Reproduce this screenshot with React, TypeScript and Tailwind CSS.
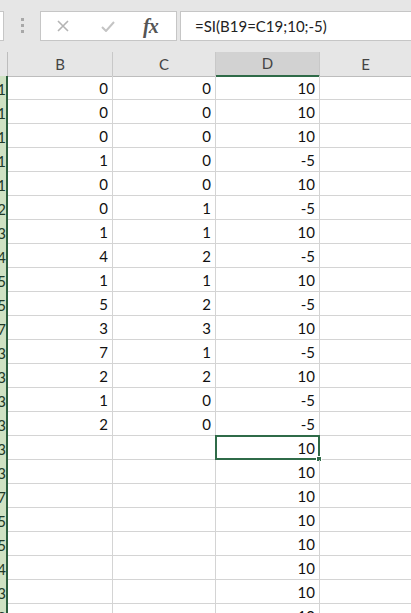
import React from 'react';

const B = [0, 0, 0, 1, 0, 0, 1, 4, 1, 5, 3, 7, 2, 1, 2];
const C = [0, 0, 0, 0, 0, 1, 1, 2, 1, 2, 3, 1, 2, 0, 0];
const D = [10, 10, 10, -5, 10, -5, 10, -5, 10, -5, 10, -5, 10, -5, -5, 10, 10, 10, 10, 10, 10, 10, 10];
const ROWS = [1, 1, 1, 1, 1, 2, 3, 4, 5, 5, 7, 3, 3, 3, 3, 3, 3, 7, 5, 5, 4, 3, 3];

const font = { fontFamily: 'Lato, "Open Sans", sans-serif' };

function Cell({ value, selected }: { value?: number; selected?: boolean }) {
  return (
    <div className="relative h-6 border-r border-b border-[#d4d4d4] flex items-end justify-end pr-1 pb-[3px] text-[15px] leading-none text-[#111]">
      {value !== undefined ? value : ''}
      {selected && (
        <div className="absolute -left-px -top-px right-[-1px] bottom-[-1px] border-2 border-[#2f6b48]">
          <div className="absolute -right-[4px] -bottom-[4px] w-[6px] h-[6px] bg-[#2f6b48] border border-white" />
        </div>
      )}
    </div>
  );
}

export default function App() {
  return (
    <div className="w-[411px] h-[613px] overflow-hidden bg-white" style={font}>
      {/* formula bar */}
      <div className="h-[52px] bg-[#e6e6e6] flex items-start pt-[11px]">
        <div className="w-[4px] h-[30px] bg-white border border-l-0 border-[#c6c6c6]" />
        <div className="w-[36px] flex flex-col items-center gap-[3px] pt-[7px]">
          <span className="w-[3px] h-[3px] bg-[#a8a8a8]" />
          <span className="w-[3px] h-[3px] bg-[#a8a8a8]" />
          <span className="w-[3px] h-[3px] bg-[#a8a8a8]" />
        </div>
        <div className="w-[137px] h-[30px] bg-white border border-[#c6c6c6] flex items-center">
          <svg width="12" height="12" viewBox="0 0 12 12" className="ml-[16px]">
            <path d="M1 1 L11 11 M11 1 L1 11" stroke="#b4b4b4" strokeWidth="1.6" />
          </svg>
          <svg width="14" height="11" viewBox="0 0 14 11" className="ml-[32px]">
            <path d="M1 6 L5 10 L13 1" stroke="#c4c4c4" strokeWidth="2" fill="none" />
          </svg>
          <span
            className="ml-[28px] text-[20px] italic font-bold text-[#555] leading-none tracking-[-1px]"
            style={{ fontFamily: '"Liberation Serif", serif' }}
          >
            fx
          </span>
        </div>
        <div className="ml-[3px] flex-1 h-[30px] bg-white border border-r-0 border-[#c6c6c6] flex items-center pl-[14px] text-[15px] text-[#222]">
          =SI(B19=C19;10;-5)
        </div>
      </div>

      {/* column headers */}
      <div className="grid grid-cols-[8px_105px_103px_104px_1fr] h-6 bg-[#e6e6e6] text-[15px] text-[#444]">
        <div className="border-r border-b border-[#bdbdbd]" />
        <div className="border-r border-b border-[#c8c8c8] border-b-[#bdbdbd] flex items-center justify-center">B</div>
        <div className="border-r border-b border-[#c8c8c8] border-b-[#bdbdbd] flex items-center justify-center">C</div>
        <div className="border-r border-[#c8c8c8] bg-[#d2d2d2] border-b-2 border-b-[#2f6b48] flex items-center justify-center">D</div>
        <div className="border-b border-[#bdbdbd] flex items-center justify-center">E</div>
      </div>

      {/* rows */}
      <div className="grid grid-cols-[8px_105px_103px_104px_1fr]">
        {ROWS.map((r, i) => (
          <React.Fragment key={i}>
            <div className="h-6 bg-[#cfe2c3] border-r-2 border-[#2c5e3d] overflow-hidden flex items-end justify-end pb-[3px] text-[15px] leading-none text-[#1f3a28]">
              <span>{r}</span>
            </div>
            <Cell value={B[i]} />
            <Cell value={C[i]} />
            <Cell value={D[i]} selected={i === 15} />
            <div className="h-6 border-b border-[#d4d4d4]" />
          </React.Fragment>
        ))}
      </div>
    </div>
  );
}
